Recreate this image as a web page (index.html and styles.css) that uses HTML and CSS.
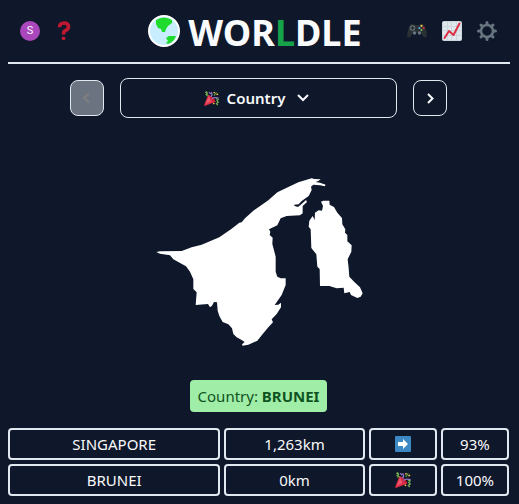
FILE: index.html
```html
<!DOCTYPE html>
<html lang="en">
<head>
<meta charset="utf-8">
<meta name="viewport" content="width=device-width, initial-scale=1">
<title>Worldle</title>
<link rel="stylesheet" href="styles.css">
</head>
<body>
<svg class="sprite" aria-hidden="true">
  <symbol id="party" viewBox="0 0 36 36">
    <path fill="#dd2e44" d="M10 9Q7 17 1 32Q-1 37 5 35L28 26Q24 15 10 9Z"/>
    <path fill="#ea596e" d="M12 11Q8 21 4 31L17 25Q12 18 12 11Z"/>
    <path fill="#be1931" d="M13 10Q24 14 27 25Q22 25 17 18Q13 12 13 10Z"/>
    <path fill="none" stroke="#77b255" stroke-width="3" d="M3 4L6 2L8 5L5 8L10 11M29 18L34 20L31 23L34 27L30 30L33 34"/>
    <path fill="none" stroke="#9179c4" stroke-width="3" d="M16 14Q22 9 17 3M19 19Q24 14 35 17M12 3L16 7"/>
    <path fill="none" stroke="#ffcc4d" stroke-width="3" d="M23 5L26 3M30 9L34 7M22 31L25 29"/>
    <path fill="none" stroke="#5c913b" stroke-width="3" d="M24 11L30 3M5 12L8 10"/>
  </symbol>
</svg>
<header class="topbar">
  <div class="tools">
    <button class="avatar" aria-label="Profile">S</button>
    <button class="tool" aria-label="Help">
      <svg viewBox="0 0 20 20" width="20" height="20"><path fill="none" stroke="#be1931" stroke-width="3.6" d="M5.500 6.300Q5.500 2 10 2Q14.500 2 14.500 5.800Q14.500 8.500 11.500 9.500Q9.500 10.300 9.500 13.500"/><circle cx="9.500" cy="17.300" r="1.900" fill="#be1931"/></svg>
    </button>
  </div>
  <h1 class="brand">
    <svg viewBox="0 0 32 32" width="32" height="32" aria-hidden="true"><circle cx="16" cy="16" r="15" fill="#c8edff" stroke="#fff" stroke-width="2"/><path fill="#1fdb2e" d="M8 5Q16 0 24 5L24 8L20 11L18 14L17 17L14 17L13 14L10 13L8 9ZM18 23L21 21L28 21Q26 27 20 29L18 28L20 26Z"/></svg>
    <span class="wordmark">WOR<span class="accent">L</span>DLE</span>
  </h1>
  <nav class="tools tools-end" aria-label="Game">
    <button class="tool" aria-label="Games">
      <svg viewBox="0 0 20 20" width="20" height="20"><path fill="#292f33" d="M3 4Q5 2 8 4H12Q15 2 17 4Q20 10 20 15Q18 18 16 15L14 12H6L4 15Q2 18 0 15Q0 10 3 4Z"/><circle cx="5.500" cy="7" r="2.800" fill="#66757f"/><path stroke="#292f33" stroke-width="1.300" d="M5.500 5V9M3.500 7H7.500"/><circle cx="7.500" cy="12" r="1.700" fill="#66757f"/><circle cx="12.500" cy="12" r="1.700" fill="#66757f"/><circle cx="14.500" cy="4.800" r="1.100" fill="#ffcc4d"/><circle cx="16.700" cy="7" r="1.100" fill="#dd2e44"/><circle cx="14.500" cy="9" r="1.100" fill="#77b255"/><circle cx="12.400" cy="7" r="1.100" fill="#55acee"/></svg>
    </button>
    <button class="tool" aria-label="Statistics">
      <svg viewBox="0 0 20 20" width="20" height="20"><rect width="20" height="20" rx="2" fill="#ccd6dd"/><path fill="#e1e8ed" d="M1 1H5V5H1ZM6 1H9V5H6ZM10 1H14V5H10ZM15 1H19V5H15ZM1 6H5V9H1ZM6 6H9V9H6ZM10 6H14V9H10ZM15 6H19V9H15ZM1 10H5V14H1ZM6 10H9V14H6ZM10 10H14V14H10ZM15 10H19V14H15ZM1 15H5V19H1ZM6 15H9V19H6ZM10 15H14V19H10ZM15 15H19V19H15Z"/><path fill="none" stroke="#dd2e44" stroke-width="2" stroke-linecap="round" stroke-linejoin="round" d="M2.500 17L7 10L11.500 14L17.500 2.500"/></svg>
    </button>
    <button class="tool" aria-label="Settings">
      <svg viewBox="0 0 20 20" width="20" height="20"><circle cx="10" cy="10" r="6" fill="none" stroke="#66757f" stroke-width="2.500"/><path stroke="#66757f" stroke-width="3" stroke-linecap="round" d="M10 1.500V3M10 17V18.500M1.500 10H3M17 10H18.500M4 4L5 5M15 15L16 16M16 4L15 5M5 15L4 16"/></svg>
    </button>
  </nav>
</header>
<main>
  <div class="rounds">
    <button class="step" aria-label="Previous round" disabled><svg viewBox="0 0 16 16" width="16" height="16"><path class="line" d="M10 3.500L5 8L10 12.500"/></svg></button>
    <button class="picker"><svg width="15" height="15" aria-hidden="true"><use href="#party"/></svg><span>Country</span><svg class="caret" viewBox="0 0 12 12" width="12" height="12" aria-hidden="true"><path class="line" d="M1 3L6 8L11 3"/></svg></button>
    <button class="step" aria-label="Next round"><svg viewBox="0 0 16 16" width="16" height="16"><path class="line" d="M6 4L10.500 8.500L6 13"/></svg></button>
  </div>
  <figure class="map">
    <svg viewBox="0 0 654 540" role="img" aria-label="Country outline"><path d="M19 246L30 244L95 243L125 232L155 224L208 202L245 176L268 158L275 157L285 145L310 122L355 91L382 67L445 37L485 25L493 27L512 28L505 33L497 36L510 38L527 44L524 49L510 46L490 44L483 50L485 60L476 78L455 93L446 103L432 104L434 108L444 111L455 102L468 90L471 96L458 108L458 130L450 136L410 138L392 145L382 166L357 178L361 185L359 195L368 203L367 222L377 260L377 305L382 320L392 325L407 325L407 345L395 375L374 405L385 404L393 398L393 412L380 432L365 448L369 457L355 472L340 490L322 512L295 524L278 527L276 523L284 516L275 510L260 502L250 492L246 475L235 463L218 456L208 438L203 422L201 397L192 396L186 407L180 412L174 402L137 405L140 367L130 357L130 328L120 305L108 289L70 268L60 256L30 251ZM513 95L520 92L538 92L539 104L552 111L562 128L576 144L577 163L586 178L585 188L592 195L592 214L605 226L604 245L593 268L596 295L598 320L613 336L630 352L638 370L632 380L622 384L603 375L599 366L583 370L581 353L560 355L538 348L510 348L509 297L502 290L499 253L484 234L482 178L476 170L478 152L488 138L494 150L495 128L506 121L516 122L519 108Z"/></svg>
  </figure>
  <p class="answer">Country: <strong>BRUNEI</strong></p>
  <table class="guesses" aria-label="Guesses">
    <tbody>
      <tr><td>SINGAPORE</td><td>1,263km</td><td><svg viewBox="0 0 16 16" width="16" height="16" role="img" aria-label="East"><rect width="16" height="16" rx="1" fill="#3b88c3"/><path fill="#fff" d="M3 6H8V3L13 8L8 13V10H3Z"/></svg></td><td>93%</td></tr>
      <tr><td>BRUNEI</td><td>0km</td><td><svg width="16" height="16" role="img" aria-label="Correct"><use href="#party"/></svg></td><td>100%</td></tr>
    </tbody>
  </table>
</main>
</body>
</html>
```

FILE: styles.css
```css
* { box-sizing: border-box; }

body {
  margin: 0;
  padding: 0 9px 0 8px;
  background: #0f172a;
  color: #f8fafc;
  font: 16px/24px "Noto Sans", "Open Sans", sans-serif;
}

main { padding-right: 1px; }

button {
  padding: 0;
  border: 0;
  background: none;
  color: inherit;
  font: inherit;
  cursor: pointer;
}

svg { display: block; }
.sprite { position: absolute; width: 0; height: 0; }
.line { fill: none; stroke: currentColor; stroke-width: 2; }

.topbar {
  display: grid;
  grid-template-columns: 1fr auto 1fr;
  align-items: center;
  height: 64px;
  border-bottom: 2px solid #e2e8f0;
}

.tools { display: flex; align-items: center; gap: 14px; padding: 0 12px; }
.tools-end { justify-content: flex-end; gap: 15px; padding-right: 13px; }

.avatar {
  width: 20px;
  height: 20px;
  border-radius: 50%;
  background: #ab47bc;
  font: 11px/20px Roboto, sans-serif;
}

.brand {
  display: flex;
  align-items: center;
  gap: 8px;
  margin: 0;
  padding-right: 8px;
  font-size: 36px;
  line-height: 40px;
  font-weight: 700;
}

.wordmark { padding-top: 4px; }
.accent { color: #16a34a; }

.rounds {
  display: flex;
  justify-content: center;
  align-items: center;
  gap: 16px;
  margin-top: 14px;
  padding: 0 62px;
}

.step, .picker {
  display: flex;
  align-items: center;
  justify-content: center;
  border: 1px solid #e2e8f0;
  border-radius: 8px;
}

.step { flex: none; width: 34px; height: 36px; }
.step:disabled { background: #6b7280; color: #808080; }
.picker { flex: 1; height: 40px; gap: 8px; font-weight: 600; font-size: 15px; }
.caret { margin-left: 4px; }
.picker { padding-right: 4px; }

.map { width: 218px; max-width: 100%; margin: 52px auto 30px; }
.map path { fill: #fff; }

.answer {
  width: fit-content;
  margin: 0 auto 16px;
  padding: 4px 8px;
  border-radius: 4px;
  background: #a0eda8;
  color: #0f5420;
  font-size: 15px;
}

.guesses { display: block; }
.guesses tbody { display: grid; gap: 4px; }
.guesses tr { display: grid; grid-template-columns: repeat(7, 1fr); gap: 4px; }
.guesses td {
  display: flex;
  align-items: center;
  justify-content: center;
  height: 32px;
  padding: 0;
  border: 2px solid #e2e8f0;
  border-radius: 4px;
  font-size: 15px;
}
.guesses td:nth-child(1) { grid-column: span 3; }
.guesses td:nth-child(2) { grid-column: span 2; }
```
